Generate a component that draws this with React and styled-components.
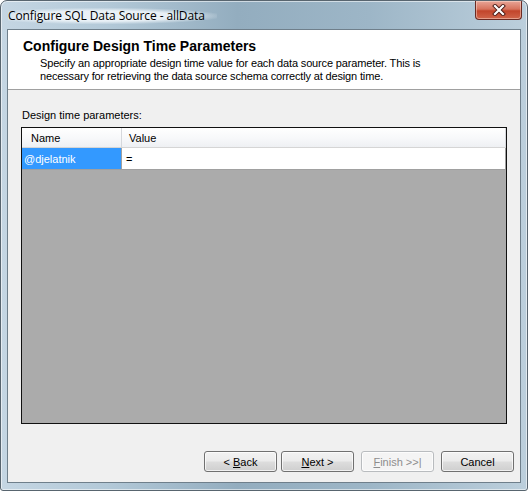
import styled, { createGlobalStyle } from "styled-components";

const GlobalStyle = createGlobalStyle`
  html, body {
    margin: 0;
    padding: 0;
    background: #ffffff;
  }
  body {
    font-family: "Liberation Sans", Arial, sans-serif;
    font-size: 11px;
    color: #000;
  }
`;

const Window = styled.div`
  box-sizing: border-box;
  width: 528px;
  height: 491px;
  display: flex;
  flex-direction: column;
  border: 1px solid #58656f;
  border-radius: 7px 7px 3px 3px;
  background: linear-gradient(
    90deg,
    #c5d6e3 0%,
    #b3c9d8 20%,
    #93adbf 45%,
    #9db6c7 70%,
    #bccfdc 100%
  );
  box-shadow: inset 0 0 0 1px rgba(255, 255, 255, 0.55);
  overflow: hidden;
`;

const TitleBar = styled.div`
  height: 28px;
  display: flex;
  align-items: flex-start;
  justify-content: space-between;
  flex-shrink: 0;
`;

const Caption = styled.div`
  margin: 7px 0 0 7px;
  padding: 0 12px 0 0;
  font-family: "Open Sans", "Noto Sans", sans-serif;
  font-size: 12px;
  line-height: 16px;
  letter-spacing: -0.1px;
  color: #000;
  background: radial-gradient(
    ellipse at 45% 50%,
    rgba(236, 243, 248, 0.95) 45%,
    rgba(236, 243, 248, 0) 75%
  );
`;

const CloseButton = styled.div`
  width: 45px;
  height: 18px;
  margin-right: 5px;
  display: flex;
  align-items: center;
  justify-content: center;
  border: 1px solid #6b2a22;
  border-top: none;
  border-radius: 0 0 4px 4px;
  background: linear-gradient(180deg, #e8a597 0%, #d7735d 45%, #c2452b 55%, #d0654a 100%);
  box-shadow: inset 0 0 0 1px rgba(255, 230, 220, 0.45);
`;

const Client = styled.div`
  flex: 1;
  margin: 0 6px 7px 6px;
  border: 1px solid #6f7f8b;
  background: #f0f0f0;
  display: flex;
  flex-direction: column;
`;

const Header = styled.div`
  height: 60px;
  box-sizing: border-box;
  background: #ffffff;
  border-bottom: 1px solid #a0a0a0;
  padding: 7px 0 0 15px;
`;

const Heading = styled.h1`
  margin: 0;
  font-size: 14px;
  line-height: 18px;
  font-weight: bold;
`;

const Description = styled.p`
  margin: 2px 0 0 17px;
  font-size: 11px;
  line-height: 13px;
  white-space: nowrap;
  letter-spacing: -0.15px;
`;

const Body = styled.div`
  flex: 1;
  display: flex;
  flex-direction: column;
  padding: 19px 13px 0 13px;
`;

const FieldLabel = styled.div`
  font-size: 11px;
  line-height: 13px;
  margin: 0 0 5px 1px;
`;

const Grid = styled.div`
  width: 486px;
  height: 297px;
  box-sizing: border-box;
  border: 1px solid #111;
  background: #ababab;
  display: flex;
  flex-direction: column;
`;

const Row = styled.div`
  display: grid;
  grid-template-columns: 100px 1fr;
  height: ${(p) => p.$height}px;
  box-sizing: border-box;
  border-bottom: 1px solid ${(p) => p.$line};
`;

const HeadCell = styled.div`
  background: linear-gradient(180deg, #ffffff 0%, #f7f8fa 55%, #eef0f3 100%);
  border-right: 1px solid #d6d8dc;
  padding-left: ${(p) => (p.$first ? 9 : 7)}px;
  display: flex;
  align-items: center;
  font-size: 11px;
`;

const Cell = styled.div`
  background: ${(p) => (p.$selected ? "#3399ff" : "#ffffff")};
  color: ${(p) => (p.$selected ? "#ffffff" : "#000")};
  border-right: 1px solid #a0a0a0;
  padding-left: ${(p) => (p.$selected ? 2 : 4)}px;
  display: flex;
  align-items: center;
  font-size: 11px;
`;

const Footer = styled.div`
  display: flex;
  justify-content: flex-end;
  padding: 0 6px 10px 0;
  margin-top: auto;
`;

const Button = styled.button`
  width: 73px;
  height: 21px;
  margin-left: ${(p) => p.$gap}px;
  padding: 0;
  box-sizing: border-box;
  font-family: "Liberation Sans", Arial, sans-serif;
  font-size: 11px;
  color: ${(p) => (p.disabled ? "#8d8d8d" : "#000")};
  border: 1px solid ${(p) => (p.disabled ? "#b9bcbf" : "#707070")};
  border-radius: 3px;
  background: ${(p) =>
    p.disabled
      ? "#f4f4f4"
      : "linear-gradient(180deg, #f2f2f2 0%, #ebebeb 48%, #dddddd 52%, #cfcfcf 100%)"};
  box-shadow: inset 0 0 0 1px rgba(255, 255, 255, 0.7);
  u {
    text-decoration: underline;
  }
`;

export default function App() {
  return (
    <>
      <GlobalStyle />
      <Window>
        <TitleBar>
          <Caption>Configure SQL Data Source - allData</Caption>
          <CloseButton>
            <svg width="14" height="12" viewBox="0 0 14 12">
              <path d="M3 2 L11 10 M11 2 L3 10" stroke="#4a1a14" strokeWidth="4" strokeLinecap="square" />
              <path d="M3 2 L11 10 M11 2 L3 10" stroke="#ffffff" strokeWidth="2.2" strokeLinecap="square" />
            </svg>
          </CloseButton>
        </TitleBar>
        <Client>
          <Header>
            <Heading>Configure Design Time Parameters</Heading>
            <Description>
              Specify an appropriate design time value for each data source parameter. This is
              <br />
              necessary for retrieving the data source schema correctly at design time.
            </Description>
          </Header>
          <Body>
            <FieldLabel>Design time parameters:</FieldLabel>
            <Grid>
              <Row $height={20} $line="#d5d5d5">
                <HeadCell $first>Name</HeadCell>
                <HeadCell>Value</HeadCell>
              </Row>
              <Row $height={22} $line="#a0a0a0">
                <Cell $selected>@djelatnik</Cell>
                <Cell>=</Cell>
              </Row>
            </Grid>
          </Body>
          <Footer>
            <Button $gap={0}>
              &lt; <u>B</u>ack
            </Button>
            <Button $gap={4}>
              <u>N</u>ext &gt;
            </Button>
            <Button $gap={7} disabled>
              <u>F</u>inish &gt;&gt;|
            </Button>
            <Button $gap={7}>Cancel</Button>
          </Footer>
        </Client>
      </Window>
    </>
  );
}
